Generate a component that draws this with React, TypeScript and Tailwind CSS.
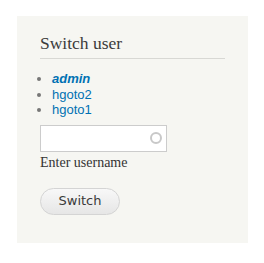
export default function App() {
  return (
    <div className="w-[264px] h-[263px] bg-white pt-4 pl-[17px]">
      <div className="w-[231px] h-[227px] bg-[#f6f6f2] pl-[23px] pt-[17px]">
        <h2 className="text-[17.5px] leading-[20px] text-[#3b3b3b] font-['Liberation_Serif',serif] pb-[5px] border-b border-[#d8d8d4] w-[185px]">
          Switch user
        </h2>
        <ul className="mt-[12px] pl-[12px] list-disc marker:text-[#777] text-[13px] leading-[15.5px] font-['Liberation_Sans',sans-serif] text-[#0071b3]">
          <li><a className="font-bold italic">admin</a></li>
          <li><a>hgoto2</a></li>
          <li><a>hgoto1</a></li>
        </ul>
        <div className="mt-[7px] relative w-[127px] h-[27px] bg-white border border-[#cccccc]">
          <div className="absolute right-[4px] top-[6px] w-[12px] h-[12px] rounded-full border-2 border-[#c8c8c8]" />
        </div>
        <div className="mt-[3px] text-[14px] leading-[16px] text-[#333] font-['Liberation_Serif',serif]">Enter username</div>
        <button className="mt-[17px] w-[80px] h-[27px] rounded-full border border-[#d4d4d4] bg-gradient-to-b from-[#f8f8f8] to-[#e6e6e6] text-[13px] text-[#3a3a3a] font-['DejaVu_Sans',sans-serif]">
          Switch
        </button>
      </div>
    </div>
  );
}
